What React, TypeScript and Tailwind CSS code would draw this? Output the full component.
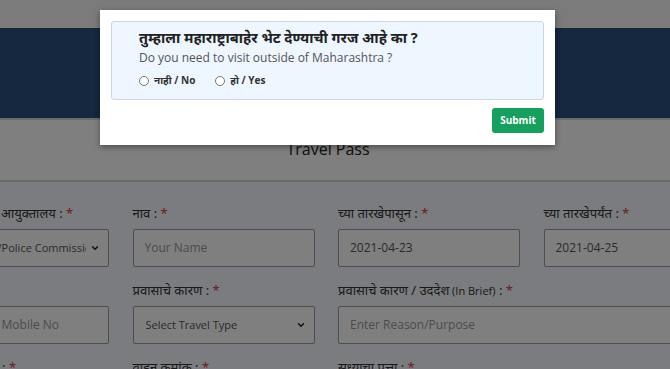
import { ChevronDown } from "lucide-react";

const deva = { fontFamily: '"Noto Sans", "Noto Sans Devanagari", "Mukta", "Hind", sans-serif' };

function Label({ text, extra }: { text: string; extra?: string }) {
  return (
    <div className="mb-[8px] h-[16px] whitespace-nowrap text-[13px] leading-[16px] text-[#333]" style={deva}>
      {text}
      {extra && <span className="font-['Open_Sans'] text-[11px]"> {extra}</span>}
      <span> : </span>
      <span className="text-[#dc3545]">*</span>
    </div>
  );
}

function Field({ value, dark, select, small, pad = "pl-[11px]" }: { value: string; dark?: boolean; select?: boolean; small?: boolean; pad?: string }) {
  return (
    <div className={`flex h-[38px] items-center overflow-hidden rounded-[2px] border border-[#9c9ca0] bg-white pr-[8px] ${pad}`}>
      <span
        className={`flex-1 overflow-hidden whitespace-nowrap font-['Open_Sans'] ${small ? "text-[11px]" : "text-[12px]"} ${dark ? "text-[#555]" : "text-[#999]"}`}
      >
        {value}
      </span>
      {select && <ChevronDown size={10} strokeWidth={3.5} className="ml-1 shrink-0 text-[#222]" />}
    </div>
  );
}

export default function App() {
  return (
    <div className="relative h-[369px] w-[670px] overflow-hidden bg-white">
      <div className="h-[28px] bg-[#f6f6f6]" />
      <div className="h-[90px] bg-[#2a5080]" />
      <div className="h-[2px] bg-[#d8d8d8]" />

      <div className="flex h-[62px] items-start justify-center border-b-2 border-[#d4d4d4] pr-[14px] pt-[17px]">
        <h2 className="font-['Open_Sans'] text-[16px] leading-[24px] text-[#222]">Travel Pass</h2>
      </div>

      <div className="h-full bg-[#f6f8fe] pt-[23px]">
        <div className="ml-[-73px] grid grid-cols-[182px_182px_182px_182px] gap-x-[23.5px] gap-y-[15px]">
          <div>
            <Label text="जिल्हाधिकारी / आयुक्तालय" />
            <Field value="Collector/Police Commissioner" dark select small pad="pl-[24px]" />
          </div>
          <div>
            <Label text="नाव" />
            <Field value="Your Name" />
          </div>
          <div>
            <Label text="च्या तारखेपासून" />
            <Field value="2021-04-23" dark />
          </div>
          <div>
            <Label text="च्या तारखेपर्यंत" />
            <Field value="2021-04-25" dark />
          </div>

          <div>
            <div className="mb-[8px] h-[16px]" />
            <Field value="Registered Mobile No" />
          </div>
          <div>
            <Label text="प्रवासाचे कारण" />
            <Field value="Select Travel Type" dark select small pad="pl-[12px]" />
          </div>
          <div className="col-span-2">
            <Label text="प्रवासाचे कारण / उददेश" extra="(In Brief)" />
            <Field value="Enter Reason/Purpose" />
          </div>

          <div>
            <Label text="मोबाईल क्रमांक" />
          </div>
          <div>
            <Label text="वाहन क्रमांक" />
          </div>
          <div className="col-span-2">
            <Label text="सध्याचा पत्ता" />
          </div>
        </div>
      </div>

      <div className="absolute inset-0 bg-black/50" />

      <div className="absolute left-[100px] top-[10px] w-[455px] bg-white px-[11px] pb-[12px] pt-[11px] shadow-[0_2px_6px_rgba(0,0,0,0.4)]">
        <div className="h-[79px] rounded-[3px] border border-[#c9d6e6] bg-[#eef6ff] pl-[27px] pt-[4px]">
          <div className="text-[14.5px] font-bold leading-[22px] text-[#222]" style={deva}>
            तुम्हाला महाराष्ट्राबाहेर भेट देण्याची गरज आहे का ?
          </div>
          <div className="font-['Open_Sans'] text-[12px] leading-[20px] text-[#555]">
            Do you need to visit outside of Maharashtra ?
          </div>
          <div className="mt-[5px] flex items-center gap-[20px] text-[10px] font-bold text-[#333]">
            <label className="flex items-center gap-[5px]">
              <span className="h-[10px] w-[10px] rounded-full border border-[#777] bg-white" />
              <span style={deva}>
                नाही <span className="font-['Open_Sans']">/ No</span>
              </span>
            </label>
            <label className="flex items-center gap-[5px]">
              <span className="h-[10px] w-[10px] rounded-full border border-[#777] bg-white" />
              <span style={deva}>
                हो <span className="font-['Open_Sans']">/ Yes</span>
              </span>
            </label>
          </div>
        </div>
        <div className="mt-[8px] flex justify-end">
          <button className="h-[25px] w-[52px] rounded-[3px] bg-[#16a05d] font-['Open_Sans'] text-[10px] font-bold text-white">
            Submit
          </button>
        </div>
      </div>
    </div>
  );
}
